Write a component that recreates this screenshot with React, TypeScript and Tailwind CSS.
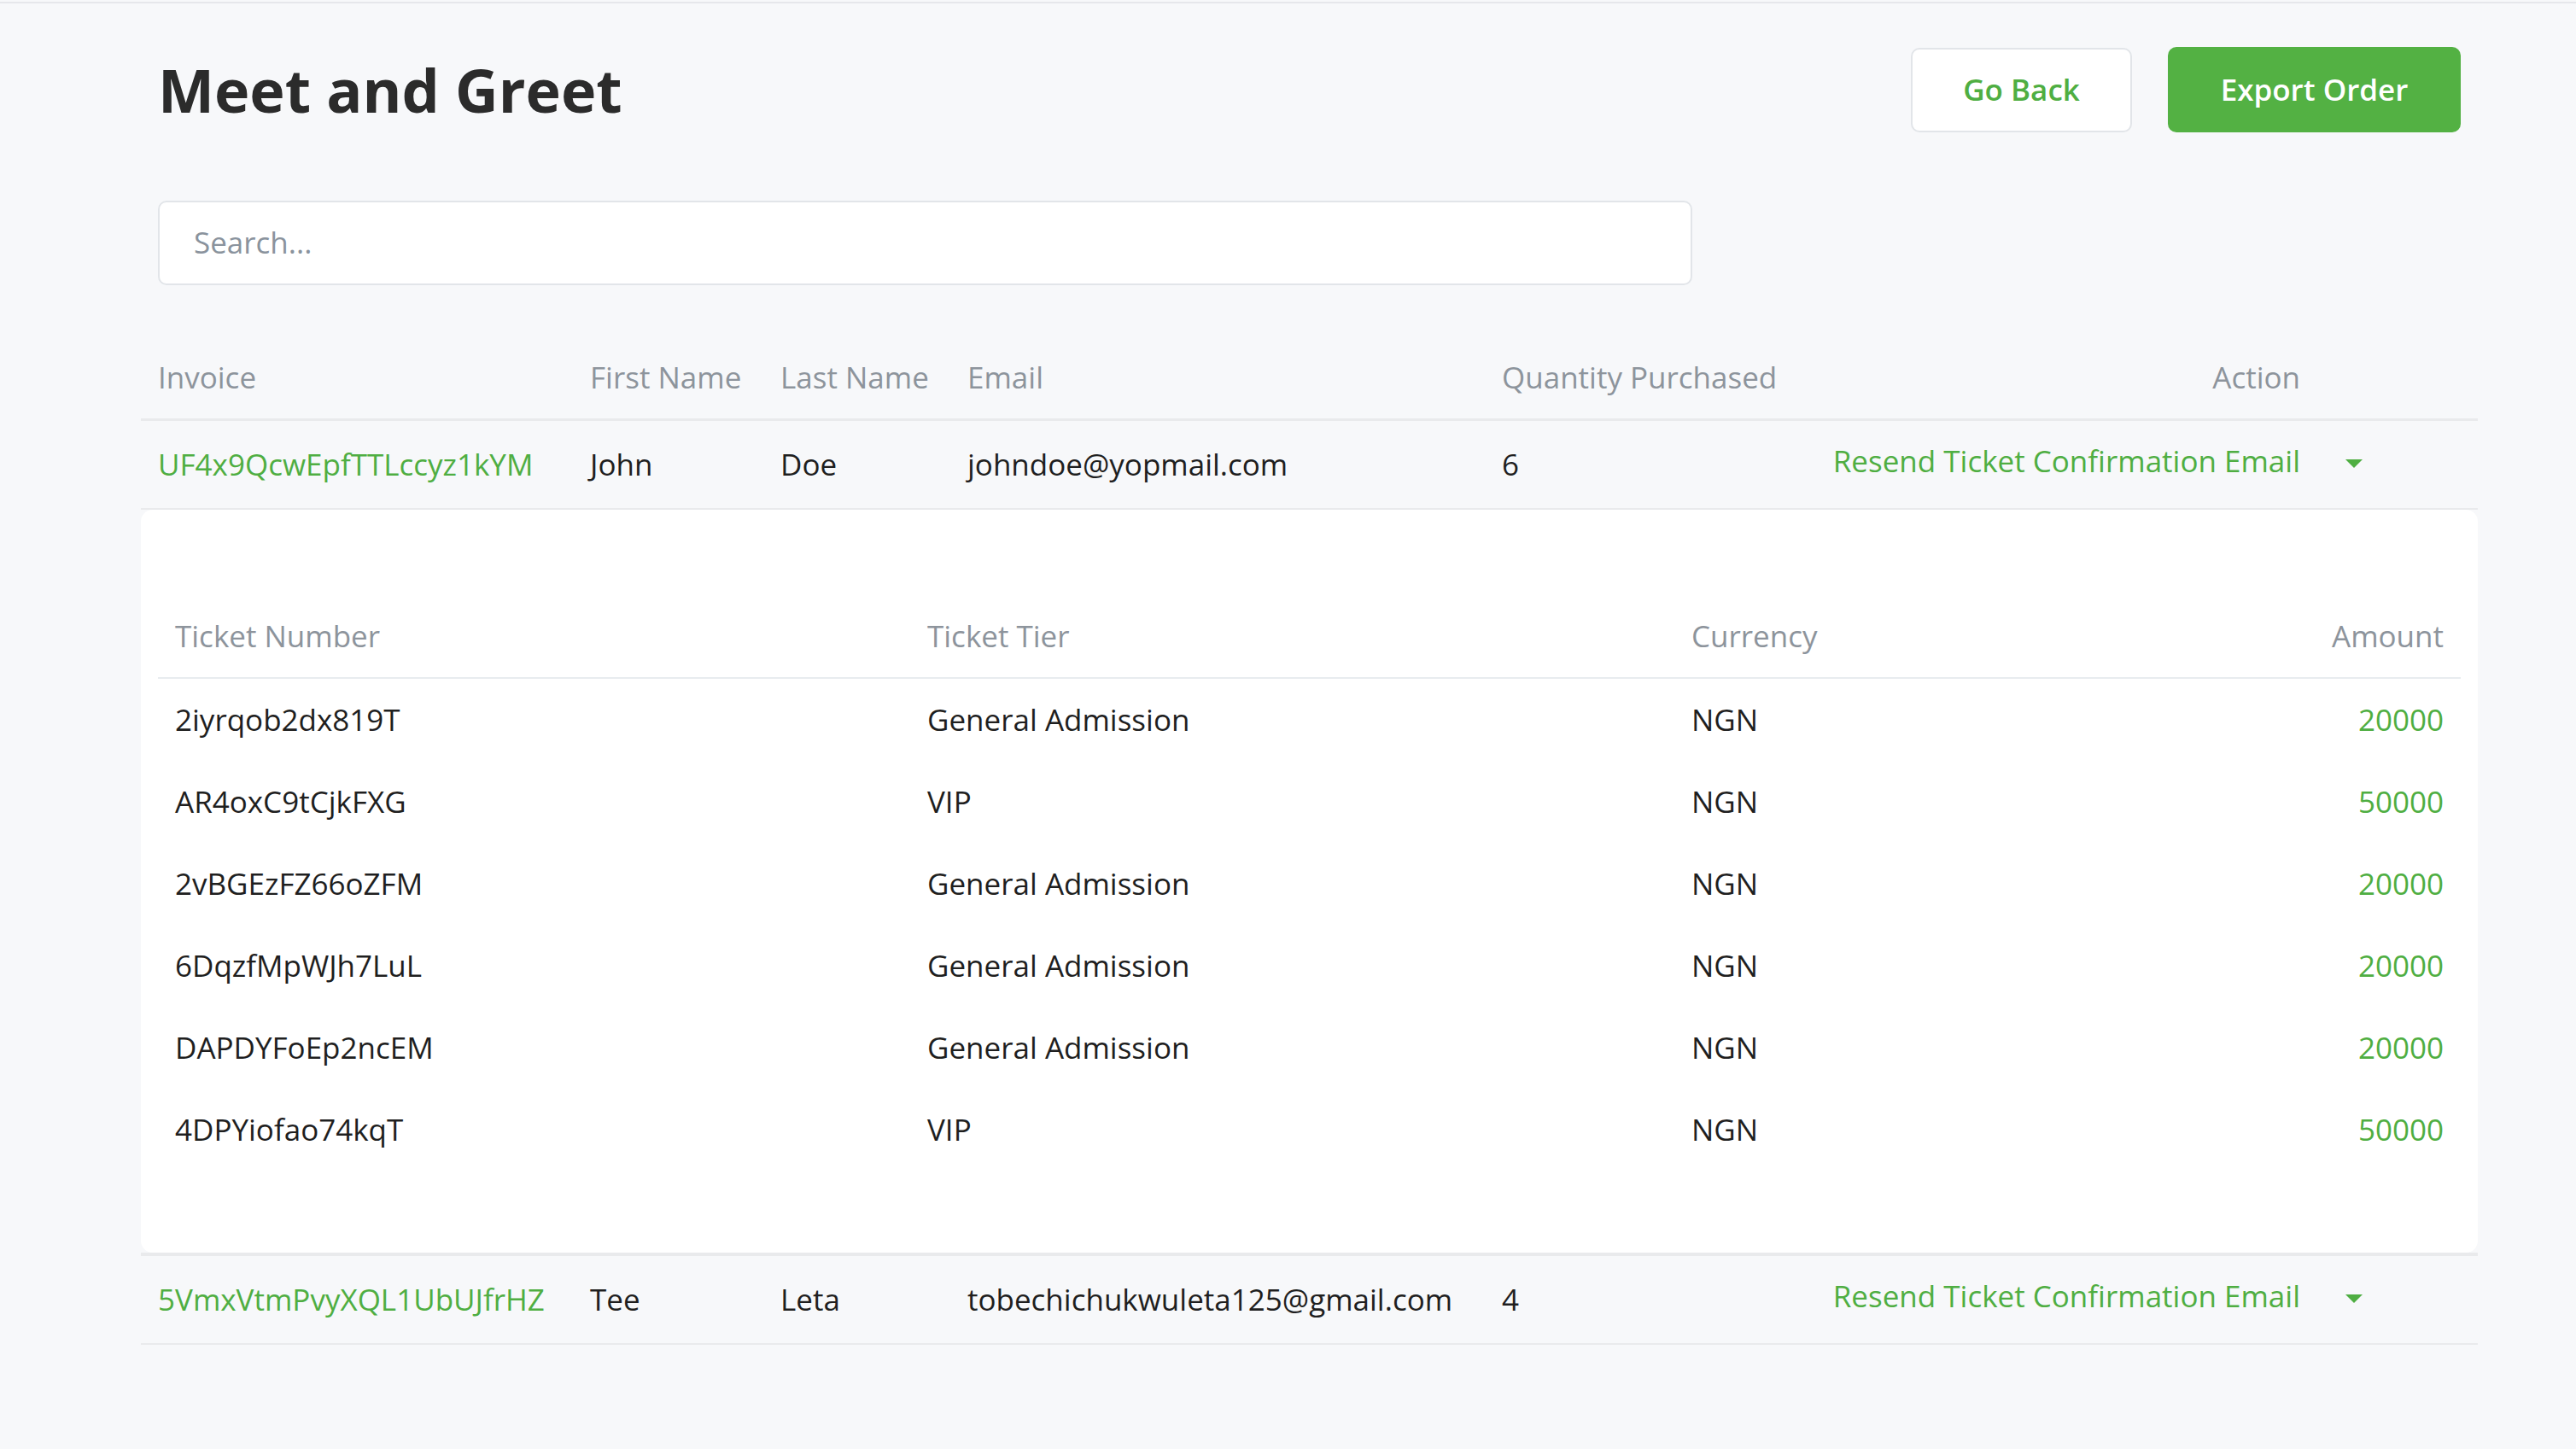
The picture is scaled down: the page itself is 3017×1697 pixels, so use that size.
import React from "react";

const orders = [
  {
    invoice: "UF4x9QcwEpfTTLccyz1kYM",
    first: "John",
    last: "Doe",
    email: "johndoe@yopmail.com",
    qty: "6",
    expanded: true,
  },
  {
    invoice: "5VmxVtmPvyXQL1UbUJfrHZ",
    first: "Tee",
    last: "Leta",
    email: "tobechichukwuleta125@gmail.com",
    qty: "4",
    expanded: false,
  },
];

const tickets = [
  { num: "2iyrqob2dx819T", tier: "General Admission", cur: "NGN", amt: "20000" },
  { num: "AR4oxC9tCjkFXG", tier: "VIP", cur: "NGN", amt: "50000" },
  { num: "2vBGEzFZ66oZFM", tier: "General Admission", cur: "NGN", amt: "20000" },
  { num: "6DqzfMpWJh7LuL", tier: "General Admission", cur: "NGN", amt: "20000" },
  { num: "DAPDYFoEp2ncEM", tier: "General Admission", cur: "NGN", amt: "20000" },
  { num: "4DPYiofao74kqT", tier: "VIP", cur: "NGN", amt: "50000" },
];

function Caret() {
  return (
    <svg width="20" height="10" viewBox="0 0 20 10" className="block">
      <path d="M0 0H20L10 10Z" fill="#4fae42" />
    </svg>
  );
}

function TicketPanel() {
  return (
    <div className="bg-white rounded-[14px] px-[20px] pt-[100px] pb-[96px]">
      <div className="grid grid-cols-[881px_895px_minmax(0,1fr)_minmax(0,1fr)] h-[98px] items-center border-b-2 border-[#e8ecef] text-[#8d949c]">
        <div className="px-[20px]">Ticket Number</div>
        <div className="px-[20px]">Ticket Tier</div>
        <div className="px-[20px]">Currency</div>
        <div className="px-[20px] text-right">Amount</div>
      </div>
      {tickets.map((t) => (
        <div
          key={t.num}
          className="grid grid-cols-[881px_895px_minmax(0,1fr)_minmax(0,1fr)] h-[96px] items-center text-[#1f1f1f]"
        >
          <div className="px-[20px]">{t.num}</div>
          <div className="px-[20px]">{t.tier}</div>
          <div className="px-[20px]">{t.cur}</div>
          <div className="px-[20px] text-right text-[#4fae42]">{t.amt}</div>
        </div>
      ))}
    </div>
  );
}

export default function App() {
  return (
    <div className="min-h-screen bg-[#f7f8fa] font-['Open_Sans',sans-serif] text-[35px]">
      <div className="h-[2px]" />
      <div className="h-[2px] bg-[#e6e7eb]" />
      <div className="ml-[165px] w-[2737px] pt-[51px]">
        <div className="px-[20px]">
          <div className="flex items-center justify-between h-[100px]">
            <h1 className="text-[70px] leading-[98px] font-bold text-[#2b2b2b]">
              Meet and Greet
            </h1>
            <div className="flex items-center gap-[42px]">
              <button className="w-[259px] h-[99px] border-2 border-[#e2e5e9] rounded-[10px] bg-white text-[#4fae42] text-[35px] font-semibold">
                Go Back
              </button>
              <button className="w-[343px] h-[100px] rounded-[10px] bg-[#53b143] text-white text-[35px] font-semibold">
                Export Order
              </button>
            </div>
          </div>
          <div className="mt-[80px] w-[1797px] h-[99px] border-2 border-[#e2e5e9] rounded-[10px] bg-white flex items-center px-[40px]">
            <input
              className="w-full outline-none bg-transparent text-[35px] placeholder:text-[#8a939d] text-[#1f1f1f]"
              placeholder="Search..."
            />
          </div>
        </div>

        <div className="mt-[60px]">
          <div className="grid grid-cols-[506px_223px_219px_626px_360px_minmax(0,1fr)_188px] h-[99px] items-center border-b-[3px] border-[#e9eaec] text-[#8d949c]">
            <div className="px-[20px]">Invoice</div>
            <div className="px-[20px]">First Name</div>
            <div className="px-[20px]">Last Name</div>
            <div className="px-[20px]">Email</div>
            <div className="px-[20px] whitespace-nowrap">Quantity Purchased</div>
            <div className="px-[20px] text-right">Action</div>
            <div />
          </div>
          {orders.map((o) => (
            <React.Fragment key={o.invoice}>
              <div className="grid grid-cols-[506px_223px_219px_626px_360px_minmax(0,1fr)_188px] h-[104px] items-center border-b-2 border-[#e9eaec] text-[#1f1f1f]">
                <div className="px-[20px] text-[#4fae42] whitespace-nowrap">{o.invoice}</div>
                <div className="px-[20px]">{o.first}</div>
                <div className="px-[20px]">{o.last}</div>
                <div className="px-[20px] whitespace-nowrap">{o.email}</div>
                <div className="px-[20px]">{o.qty}</div>
                <div className="px-[20px] pb-[7px] text-right text-[#4fae42] whitespace-nowrap">
                  Resend Ticket Confirmation Email
                </div>
                <div className="pl-[33px] pb-[3px] flex items-center">
                  <Caret />
                </div>
              </div>
              {o.expanded && (
                <div className="border-b-[4px] border-[#e9eaec]">
                  <TicketPanel />
                </div>
              )}
            </React.Fragment>
          ))}
        </div>
      </div>
    </div>
  );
}
